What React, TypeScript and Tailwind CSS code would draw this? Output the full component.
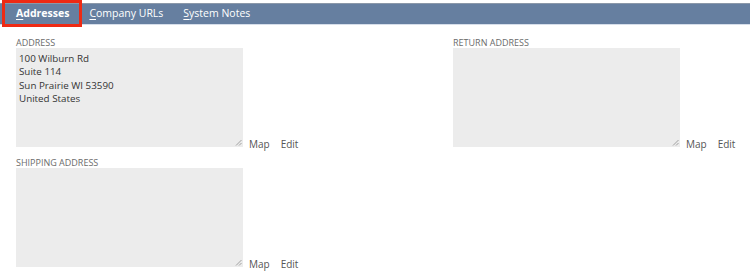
import React from 'react';

const font = { fontFamily: '"Open Sans", "Liberation Sans", sans-serif' };

const Grip: React.FC = () => (
  <svg className="absolute right-[1px] bottom-[1px]" width="7" height="7" viewBox="0 0 7 7">
    <path d="M1 6.5 L6.5 1 M4 6.5 L6.5 4" stroke="#9a9a9a" strokeWidth="0.9" fill="none" />
  </svg>
);

const AddressField: React.FC<{ label: string; lines?: string[] }> = ({ label, lines = [] }) => (
  <div>
    <div className="text-[9px] leading-[11px] text-[#6b6b6b] uppercase">{label}</div>
    <div className="flex items-end">
      <div className="relative w-[227px] h-[99px] bg-[#ececec] px-[3px] pt-[4px] text-[9.8px] leading-[13.4px] text-[#333]">
        {lines.map((l, i) => (
          <div key={i}>{l}</div>
        ))}
        <Grip />
      </div>
      <div className="flex gap-[11px] ml-[6px] text-[10px] leading-[12px] text-[#555] -mb-[3px]">
        <span>Map</span>
        <span>Edit</span>
      </div>
    </div>
  </div>
);

const App: React.FC = () => {
  const tabs = [
    { key: 'A', rest: 'ddresses', active: true },
    { key: 'C', rest: 'ompany URLs', active: false },
    { key: 'S', rest: 'ystem Notes', active: false },
  ];

  return (
    <div className="w-[750px] h-[280px] bg-white overflow-hidden relative" style={font}>
      {/* Tab bar */}
      <div className="mt-[3px] h-[22px] bg-[#667fa0] border-t border-[#8b98a9] border-b border-b-[#d6deea] flex items-center pl-[16px] gap-[20px] text-white text-[10.5px]">
        {tabs.map((t) => (
          <span key={t.key} className={t.active ? 'font-bold' : ''}>
            <span className="underline underline-offset-2">{t.key}</span>
            {t.rest}
          </span>
        ))}
      </div>
      {/* annotation box */}
      <div className="absolute left-[2px] top-0 w-[80px] h-[27px] border-[3px] border-[#ee2a14]" />

      <div className="flex pl-[16px] pt-[12px]">
        <div className="w-[437px] flex flex-col gap-[10px]">
          <AddressField
            label="Address"
            lines={['100 Wilburn Rd', 'Suite 114', 'Sun Prairie WI 53590', 'United States']}
          />
          <AddressField label="Shipping Address" />
        </div>
        <div>
          <AddressField label="Return Address" />
        </div>
      </div>
    </div>
  );
};

export default App;
